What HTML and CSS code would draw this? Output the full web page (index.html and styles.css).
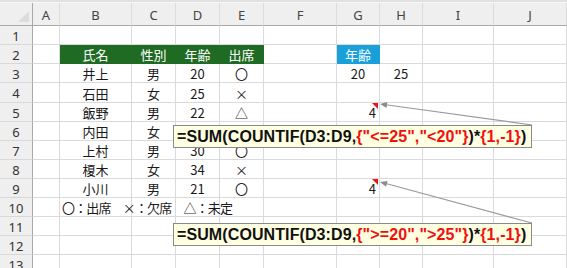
FILE: index.html
```html
<!DOCTYPE html>
<html lang="ja">
<head>
<meta charset="utf-8">
<link rel="stylesheet" href="styles.css">
</head>
<body>
<div class="wrap">
  <div class="topstrip"></div>
  <div class="sheet">
    <div class="h corner"><span class="tri"></span></div>
    <div class="h">A</div><div class="h">B</div><div class="h">C</div><div class="h">D</div><div class="h">E</div><div class="h">F</div><div class="h">G</div><div class="h">H</div><div class="h">I</div><div class="h">J</div>

    <div class="rh">1</div>
    <div class="c"></div><div class="c"></div><div class="c"></div><div class="c"></div><div class="c"></div><div class="c"></div><div class="c"></div><div class="c"></div><div class="c"></div><div class="c"></div>

    <div class="rh">2</div>
    <div class="c"></div>
    <div class="c green">氏名</div><div class="c green">性別</div><div class="c green">年齢</div><div class="c green">出席</div>
    <div class="c"></div>
    <div class="c blue">年齢</div>
    <div class="c"></div><div class="c"></div><div class="c"></div>

    <div class="rh">3</div>
    <div class="c"></div><div class="c">井上</div><div class="c">男</div><div class="c">20</div><div class="c">〇</div><div class="c"></div><div class="c">20</div><div class="c">25</div><div class="c"></div><div class="c"></div>

    <div class="rh">4</div>
    <div class="c"></div><div class="c">石田</div><div class="c">女</div><div class="c">25</div><div class="c">×</div><div class="c"></div><div class="c"></div><div class="c"></div><div class="c"></div><div class="c"></div>

    <div class="rh">5</div>
    <div class="c"></div><div class="c">飯野</div><div class="c">男</div><div class="c">22</div><div class="c">△</div><div class="c"></div><div class="c num">4<span class="note"></span></div><div class="c"></div><div class="c"></div><div class="c"></div>

    <div class="rh">6</div>
    <div class="c"></div><div class="c">内田</div><div class="c">女</div><div class="c">28</div><div class="c">〇</div><div class="c"></div><div class="c"></div><div class="c"></div><div class="c"></div><div class="c"></div>

    <div class="rh">7</div>
    <div class="c"></div><div class="c">上村</div><div class="c">男</div><div class="c">30</div><div class="c">〇</div><div class="c"></div><div class="c"></div><div class="c"></div><div class="c"></div><div class="c"></div>

    <div class="rh">8</div>
    <div class="c"></div><div class="c">榎木</div><div class="c">女</div><div class="c">34</div><div class="c">×</div><div class="c"></div><div class="c"></div><div class="c"></div><div class="c"></div><div class="c"></div>

    <div class="rh">9</div>
    <div class="c"></div><div class="c">小川</div><div class="c">男</div><div class="c">21</div><div class="c">〇</div><div class="c"></div><div class="c num">4<span class="note"></span></div><div class="c"></div><div class="c"></div><div class="c"></div>

    <div class="rh">10</div>
    <div class="c"></div><div class="c left"><span class="over">〇：出席　×：欠席　△：未定</span></div><div class="c"></div><div class="c"></div><div class="c"></div><div class="c"></div><div class="c"></div><div class="c"></div><div class="c"></div><div class="c"></div>

    <div class="rh">11</div>
    <div class="c"></div><div class="c"></div><div class="c"></div><div class="c"></div><div class="c"></div><div class="c"></div><div class="c"></div><div class="c"></div><div class="c"></div><div class="c"></div>

    <div class="rh">12</div>
    <div class="c"></div><div class="c"></div><div class="c"></div><div class="c"></div><div class="c"></div><div class="c"></div><div class="c"></div><div class="c"></div><div class="c"></div><div class="c"></div>

    <div class="rh">13</div>
    <div class="c"></div><div class="c"></div><div class="c"></div><div class="c"></div><div class="c"></div><div class="c"></div><div class="c"></div><div class="c"></div><div class="c"></div><div class="c"></div>
  </div>

  <svg class="arrows" width="567" height="268" viewBox="0 0 567 268">
    <line x1="532" y1="125" x2="384" y2="104.5" stroke="#9a9a9a" stroke-width="1.2"/>
    <polygon points="380,104 386.5,107.9 387.3,102" fill="#8c8c8c"/>
    <line x1="532" y1="223" x2="384" y2="183" stroke="#9a9a9a" stroke-width="1.2"/>
    <polygon points="380,182 386,186.7 387.6,180.9" fill="#8c8c8c"/>
  </svg>

  <div class="callout c1">=SUM(COUNTIF(D3:D9,<span class="r">{"&lt;=25","&lt;20"}</span>)*<span class="r">{1,-1}</span>)</div>
  <div class="callout c2">=SUM(COUNTIF(D3:D9,<span class="r">{"&gt;=20","&gt;25"}</span>)*<span class="r">{1,-1}</span>)</div>
</div>
</body>
</html>
```

FILE: styles.css
```css
html, body {
  margin: 0;
  padding: 0;
  background: #ffffff;
  overflow: hidden;
}

.wrap {
  position: relative;
  width: 567px;
  height: 268px;
  overflow: hidden;
  font-family: "Noto Sans CJK JP", "Noto Sans", sans-serif;
  font-size: 13px;
  color: #1a1a1a;
}

.topstrip {
  height: 2px;
  background: #e1e1e1;
  border-bottom: 1px solid #f7f7f7;
}

.sheet {
  display: grid;
  grid-template-columns: 33px 27px 72px 44px 44px 44px 73px 43px 43px 71px 73px;
  grid-template-rows: 23px 19px 19px 19px 20px 19px 19px 19px 19px 19px 19px 19px 19px 19px;
}

.h {
  box-sizing: border-box;
  background: #efefef;
  border-right: 1px solid #dcdcdc;
  border-bottom: 1px solid #a8a8a8;
  display: flex;
  align-items: center;
  justify-content: center;
  color: #444;
  font-family: "Noto Sans", sans-serif;
  font-size: 13px;
  padding-top: 1px;
}

.corner {
  position: relative;
  border-right: 1px solid #a8a8a8;
}

.tri {
  position: absolute;
  right: 3px;
  bottom: 3px;
  width: 0;
  height: 0;
  border-left: 11px solid transparent;
  border-bottom: 11px solid #dcdcdc;
}

.rh {
  box-sizing: border-box;
  background: #efefef;
  border-right: 1px solid #a8a8a8;
  border-bottom: 1px solid #d8d8d8;
  display: flex;
  align-items: center;
  justify-content: center;
  color: #333;
  font-family: "Noto Sans", sans-serif;
  font-size: 13px;
  padding-top: 1px;
}

.c {
  box-sizing: border-box;
  border-right: 1px solid #dadada;
  border-bottom: 1px solid #dadada;
  display: flex;
  align-items: center;
  justify-content: center;
  white-space: nowrap;
  line-height: 1;
  padding-top: 1px;
  position: relative;
}

.green {
  background: #1f6b24;
  color: #ffffff;
  border-right-color: #1f6b24;
  border-bottom-color: #1f6b24;
}

.blue {
  background: #1aa0d8;
  color: #ffffff;
  border-right-color: #1aa0d8;
  border-bottom-color: #1aa0d8;
}

.num {
  justify-content: flex-end;
  padding-right: 3px;
}

.note {
  position: absolute;
  top: 0;
  right: 1px;
  width: 0;
  height: 0;
  border-left: 6px solid transparent;
  border-top: 6px solid #e8161a;
}

.left {
  justify-content: flex-start;
  overflow: visible;
  padding-left: 2px;
}

.over {
  position: relative;
  z-index: 1;
  letter-spacing: -0.85px;
}

.arrows {
  position: absolute;
  left: 0;
  top: 0;
  pointer-events: none;
}

.callout {
  position: absolute;
  left: 173px;
  width: 359px;
  height: 23px;
  box-sizing: border-box;
  background: #ffffe1;
  border: 1px solid #8a8a8a;
  font-family: "Liberation Sans", Arial, sans-serif;
  font-weight: bold;
  font-size: 16px;
  letter-spacing: 0.1px;
  color: #111;
  line-height: 21px;
  padding-left: 3px;
  white-space: nowrap;
}

.c1 { top: 125px; }
.c2 { top: 223px; }

.r { color: #f01010; }
```
